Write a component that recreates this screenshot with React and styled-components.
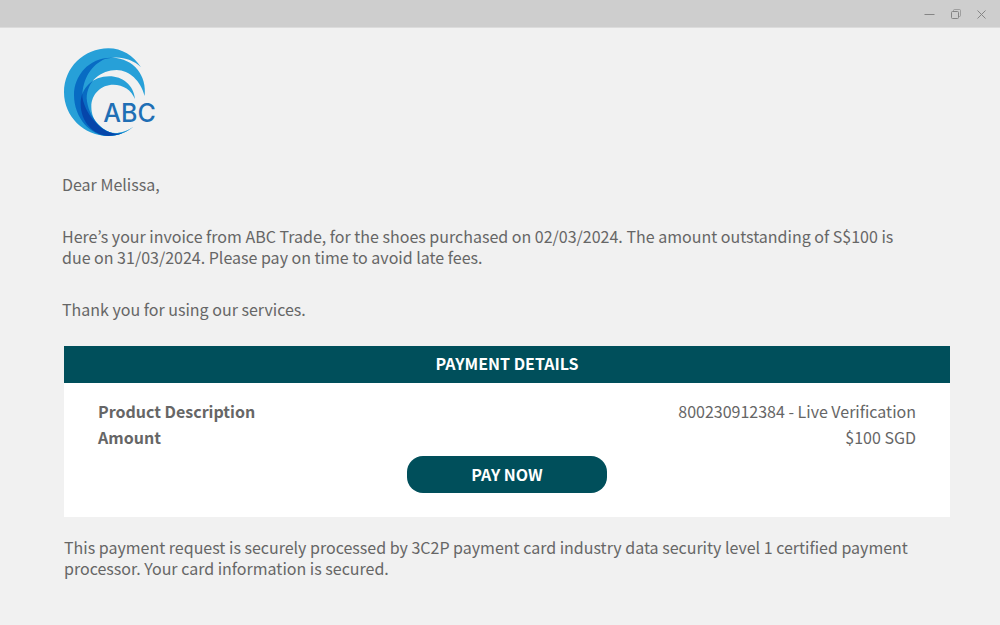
import React from 'react';
import styled, { createGlobalStyle } from 'styled-components';

const GlobalStyle = createGlobalStyle`
  * {
    box-sizing: border-box;
  }

  body {
    margin: 0;
    background: #f1f1f1;
    color: #666666;
    font-family: 'Noto Sans CJK KR', 'Open Sans', sans-serif;
    font-size: 16px;
    line-height: 21px;
  }
`;

const TitleBar = styled.header`
  display: flex;
  justify-content: flex-end;
  align-items: center;
  gap: 10px;
  height: 28px;
  padding: 0 10px;
  background: #cecece;
  border-bottom: 1px solid #dcdcdc;
`;

const WindowButton = styled.button`
  display: flex;
  width: 16px;
  height: 16px;
  padding: 0;
  border: 0;
  background: none;
  color: #858585;
`;

const Message = styled.main`
  padding: 19px 50px 24px 62px;
`;

const Logo = styled.svg`
  display: block;
  width: 97px;
  height: 90px;
  margin-bottom: 37px;
`;

const LogoText = styled.text`
  font-family: Inter, sans-serif;
  font-size: 75px;
  font-weight: 500;
  fill: #1f6fb5;
`;

const Paragraph = styled.p`
  max-width: 850px;
  margin: 31px 0 0;
`;

const Card = styled.section`
  margin: 26px 0 20px 2px;
  background: #ffffff;
`;

const CardTitle = styled.h2`
  margin: 0;
  padding: 7px 8px 9px;
  background: #004f5b;
  color: #ffffff;
  font-size: 16px;
  line-height: 21px;
  text-align: center;
`;

const CardBody = styled.div`
  padding: 15px 34px 24px;
`;

const Details = styled.dl`
  margin: 0 0 6px;
`;

const DetailRow = styled.div`
  display: flex;
  justify-content: space-between;
  line-height: 26px;
`;

const DetailLabel = styled.dt`
  font-weight: 700;
`;

const DetailValue = styled.dd`
  margin: 0;
`;

const PayButton = styled.button`
  display: block;
  width: 200px;
  height: 37px;
  margin: 0 auto;
  padding: 0;
  border: 0;
  border-radius: 16px;
  background: #004f5b;
  color: #ffffff;
  font: inherit;
  font-weight: 700;
`;

const Footnote = styled.p`
  max-width: 860px;
  margin: 0 0 0 2px;
`;

const details = [
  { label: 'Product Description', value: '800230912384 - Live Verification' },
  { label: 'Amount', value: '$100 SGD' },
];

const outerWave =
  'M273 97C250 62 216 40 175 40C102 40 42 98 42 172C42 245 102 303 175 303C205 302 230 291 250 275C235 286 215 293 198 295C165 296 108 250 97 186C97 130 126 88 165 72C205 61 246 70 273 97Z';
const middleWave =
  'M284 183C291 122 252 70 187 68C119 66 72 120 72 180C72 249 122 303 175 303C205 302 230 291 250 275C235 288 215 297 195 296C155 290 114 245 110 190C112 137 152 106 200 105C238 106 272 137 284 183Z';
const innerWave =
  'M255 192C251 151 218 124 178 124C128 124 92 160 92 207C92 259 129 300 175 303C205 302 230 291 250 275C235 288 215 294 195 294C155 290 124 258 124 215C124 176 154 149 190 149C220 149 244 165 255 192Z';

function WaveLogo() {
  return (
    <Logo viewBox="36 36 291 270" role="img" aria-label="ABC">
      <clipPath id="outer-clip">
        <path d={outerWave} />
      </clipPath>
      <clipPath id="middle-clip">
        <path d={middleWave} />
      </clipPath>
      <path fill="#27a0d8" d={outerWave} />
      <path fill="#27a0d8" d={middleWave} />
      <path fill="#27a0d8" d={innerWave} />
      {/* the waves get darker where they overlap */}
      <path fill="#086bc3" d={middleWave} clipPath="url(#outer-clip)" />
      <g clipPath="url(#middle-clip)">
        <path fill="#086bc3" d={innerWave} />
        <path fill="#0646aa" d={innerWave} clipPath="url(#outer-clip)" />
      </g>
      <LogoText x="160" y="260">ABC</LogoText>
    </Logo>
  );
}

export default function App() {
  return (
    <>
      <GlobalStyle />
      <TitleBar>
        <WindowButton aria-label="Minimize">
          <svg width="16" height="16" fill="none" stroke="currentColor">
            <path d="M2.5 8.5h10" />
          </svg>
        </WindowButton>
        <WindowButton aria-label="Restore">
          <svg width="16" height="16" fill="none" stroke="currentColor">
            <rect x="3.5" y="5.5" width="7" height="7" rx="1" />
            <path d="M5.5 5.5v-1q0-1 1-1h5q1 0 1 1v5q0 1-1 1h-1" opacity="0.65" />
          </svg>
        </WindowButton>
        <WindowButton aria-label="Close">
          <svg width="16" height="16" fill="none" stroke="currentColor">
            <path d="M3.5 4.5l8 8M11.5 4.5l-8 8" />
          </svg>
        </WindowButton>
      </TitleBar>

      <Message>
        <WaveLogo />
        <Paragraph>Dear Melissa,</Paragraph>
        <Paragraph>
          Here’s your invoice from ABC Trade, for the shoes purchased on 02/03/2024. The amount
          outstanding of S$100 is due on 31/03/2024. Please pay on time to avoid late fees.
        </Paragraph>
        <Paragraph>Thank you for using our services.</Paragraph>

        <Card>
          <CardTitle>PAYMENT DETAILS</CardTitle>
          <CardBody>
            <Details>
              {details.map((item) => (
                <DetailRow key={item.label}>
                  <DetailLabel>{item.label}</DetailLabel>
                  <DetailValue>{item.value}</DetailValue>
                </DetailRow>
              ))}
            </Details>
            <PayButton type="button">PAY NOW</PayButton>
          </CardBody>
        </Card>

        <Footnote>
          This payment request is securely processed by 3C2P payment card industry data security
          level 1 certified payment processor. Your card information is secured.
        </Footnote>
      </Message>
    </>
  );
}
